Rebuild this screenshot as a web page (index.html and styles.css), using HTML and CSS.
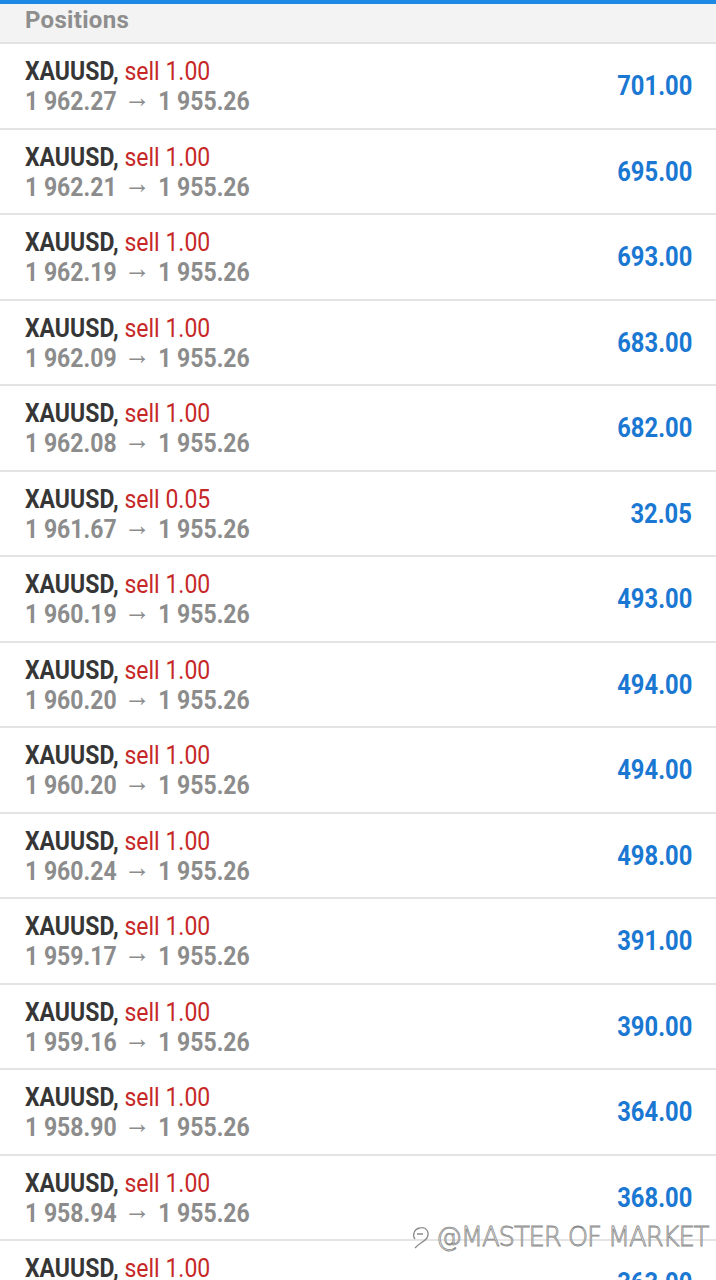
FILE: index.html
```html
<!DOCTYPE html>
<html>
	<head>
		<meta charset="utf-8">
		<title>Positions</title>
		<link rel="stylesheet" href="styles.css">
	</head>
	<body>
		<div class="topbar"></div>
		<div class="section-title">Positions</div>
		<ul class="positions">
			<li><div class="info"><div class="line1"><b>XAUUSD,</b> <span class="side">sell 1.00</span></div><div class="line2">1 962.27 <span class="arrow">→</span> 1 955.26</div></div><div class="profit">701.00</div></li>
			<li><div class="info"><div class="line1"><b>XAUUSD,</b> <span class="side">sell 1.00</span></div><div class="line2">1 962.21 <span class="arrow">→</span> 1 955.26</div></div><div class="profit">695.00</div></li>
			<li><div class="info"><div class="line1"><b>XAUUSD,</b> <span class="side">sell 1.00</span></div><div class="line2">1 962.19 <span class="arrow">→</span> 1 955.26</div></div><div class="profit">693.00</div></li>
			<li><div class="info"><div class="line1"><b>XAUUSD,</b> <span class="side">sell 1.00</span></div><div class="line2">1 962.09 <span class="arrow">→</span> 1 955.26</div></div><div class="profit">683.00</div></li>
			<li><div class="info"><div class="line1"><b>XAUUSD,</b> <span class="side">sell 1.00</span></div><div class="line2">1 962.08 <span class="arrow">→</span> 1 955.26</div></div><div class="profit">682.00</div></li>
			<li><div class="info"><div class="line1"><b>XAUUSD,</b> <span class="side">sell 0.05</span></div><div class="line2">1 961.67 <span class="arrow">→</span> 1 955.26</div></div><div class="profit">32.05</div></li>
			<li><div class="info"><div class="line1"><b>XAUUSD,</b> <span class="side">sell 1.00</span></div><div class="line2">1 960.19 <span class="arrow">→</span> 1 955.26</div></div><div class="profit">493.00</div></li>
			<li><div class="info"><div class="line1"><b>XAUUSD,</b> <span class="side">sell 1.00</span></div><div class="line2">1 960.20 <span class="arrow">→</span> 1 955.26</div></div><div class="profit">494.00</div></li>
			<li><div class="info"><div class="line1"><b>XAUUSD,</b> <span class="side">sell 1.00</span></div><div class="line2">1 960.20 <span class="arrow">→</span> 1 955.26</div></div><div class="profit">494.00</div></li>
			<li><div class="info"><div class="line1"><b>XAUUSD,</b> <span class="side">sell 1.00</span></div><div class="line2">1 960.24 <span class="arrow">→</span> 1 955.26</div></div><div class="profit">498.00</div></li>
			<li><div class="info"><div class="line1"><b>XAUUSD,</b> <span class="side">sell 1.00</span></div><div class="line2">1 959.17 <span class="arrow">→</span> 1 955.26</div></div><div class="profit">391.00</div></li>
			<li><div class="info"><div class="line1"><b>XAUUSD,</b> <span class="side">sell 1.00</span></div><div class="line2">1 959.16 <span class="arrow">→</span> 1 955.26</div></div><div class="profit">390.00</div></li>
			<li><div class="info"><div class="line1"><b>XAUUSD,</b> <span class="side">sell 1.00</span></div><div class="line2">1 958.90 <span class="arrow">→</span> 1 955.26</div></div><div class="profit">364.00</div></li>
			<li><div class="info"><div class="line1"><b>XAUUSD,</b> <span class="side">sell 1.00</span></div><div class="line2">1 958.94 <span class="arrow">→</span> 1 955.26</div></div><div class="profit">368.00</div></li>
			<li><div class="info"><div class="line1"><b>XAUUSD,</b> <span class="side">sell 1.00</span></div><div class="line2">1 958.89 <span class="arrow">→</span> 1 955.26</div></div><div class="profit">363.00</div></li>
		</ul>

		<div class="watermark">
			<svg width="24" height="26" viewBox="0 0 24 26">
				<path d="M10 4 C4 5 2 11 5 15 M7 10 h6 M10 4 c6 -2 10 4 7 10 c-3 4 -9 6 -12 10" fill="none" stroke="#8a8a8a" stroke-width="1.3"/>
			</svg>
			<span>@MASTER OF MARKET</span>
		</div>
	</body>
</html>
```

FILE: styles.css
```css
html, body {
	margin: 0;
	padding: 0;
	background: #fff;
	overflow: hidden;
}

body {
	font-family: Roboto, "Noto Sans", sans-serif;
	position: relative;
	height: 1280px;
}

.topbar {
	height: 4px;
	background: #1e88e5;
}

.section-title {
	height: 38px;
	padding-left: 25px;
	background: #f3f3f3;
	border-bottom: 2px solid #e4e4e4;
	color: #8e8e8e;
	font-weight: 700;
	font-size: 24px;
	line-height: 32px;
	letter-spacing: 0.3px;
}

.positions {
	list-style: none;
	margin: 0;
	padding: 0;
}

.positions li {
	display: flex;
	align-items: center;
	justify-content: space-between;
	padding: 12px 24px 11.5px 25px;
	border-bottom: 2px solid #e4e4e4;
}

.info {
	font-size: 26px;
	line-height: 30px;
	transform: scaleX(0.885);
	transform-origin: left center;
	white-space: nowrap;
}

.line1 b {
	color: #363636;
	font-weight: 700;
}

.side {
	color: #c62828;
}

.line2 {
	color: #8c8c8c;
	font-weight: 700;
}

.arrow {
	display: inline-block;
	font-size: 30px;
	font-weight: 400;
	line-height: 22px;
	margin: 0 2px;
	vertical-align: 3px;
}

.profit {
	color: #1a78d2;
	font-size: 27px;
	font-weight: 700;
	transform: scaleX(0.88);
	transform-origin: right center;
}

.watermark {
	position: absolute;
	left: 410px;
	top: 1222px;
	display: flex;
	align-items: center;
	gap: 2px;
	font-family: "DejaVu Sans", sans-serif;
	font-size: 26px;
	font-weight: 200;
	color: rgba(255, 255, 255, 0.9);
	-webkit-text-stroke: 0.8px #8a8a8a;
	letter-spacing: -1.2px;
}
```
